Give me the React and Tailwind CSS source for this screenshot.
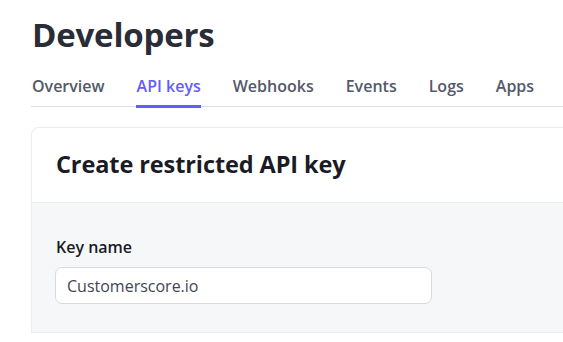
export default function App() {
  const tabs = ["Overview", "API keys", "Webhooks", "Events", "Logs", "Apps"];
  const active = "API keys";

  return (
    <div
      className="w-[563px] h-[342px] overflow-hidden bg-white pl-[31px] text-[#353a44]"
      style={{ fontFamily: '"Open Sans", "Noto Sans", sans-serif' }}
    >
      {/* header */}
      <h1 className="pt-[13px] pl-px text-[33px] leading-[44px] font-bold text-[#2a2c36] tracking-[-0.2px]">
        Developers
      </h1>

      {/* tabs */}
      <div className="mt-[17px] flex gap-[31px] border-b border-[#dcdde2] h-[33px]">
        {tabs.map((t) => (
          <div
            key={t}
            className={
              t === active
                ? "pl-px border-b-[3px] border-[#635bff] text-[#635bff] text-[16px] leading-[24px] font-semibold -mb-[2px]"
                : "pl-px text-[16px] leading-[24px] font-semibold text-[#545969]"
            }
          >
            {t}
          </div>
        ))}
      </div>

      {/* card */}
      <div className="mt-[20px] rounded-tl-[8px] border-l border-t border-[#ebeef1] bg-white">
        <div className="h-[75px] flex items-center pl-[24px] border-b border-[#ebeef1]">
          <h2 className="text-[23.5px] font-bold text-[#1a1b25] tracking-[-0.1px]">
            Create restricted API key
          </h2>
        </div>

        <div className="bg-[#f6f7f9] pl-[23px] pt-[33px] pb-[28px] border-b border-[#ebeef1]">
          <label className="block pl-px text-[16px] leading-[22px] font-semibold text-[#1a1b25]">
            Key name
          </label>
          <div className="mt-[9px] w-[377px] h-[37px] rounded-[7px] border border-[#d8dae0] bg-white flex items-center pl-[11px] text-[16px] text-[#414552]">
            Customerscore.io
          </div>
        </div>
      </div>
    </div>
  );
}
